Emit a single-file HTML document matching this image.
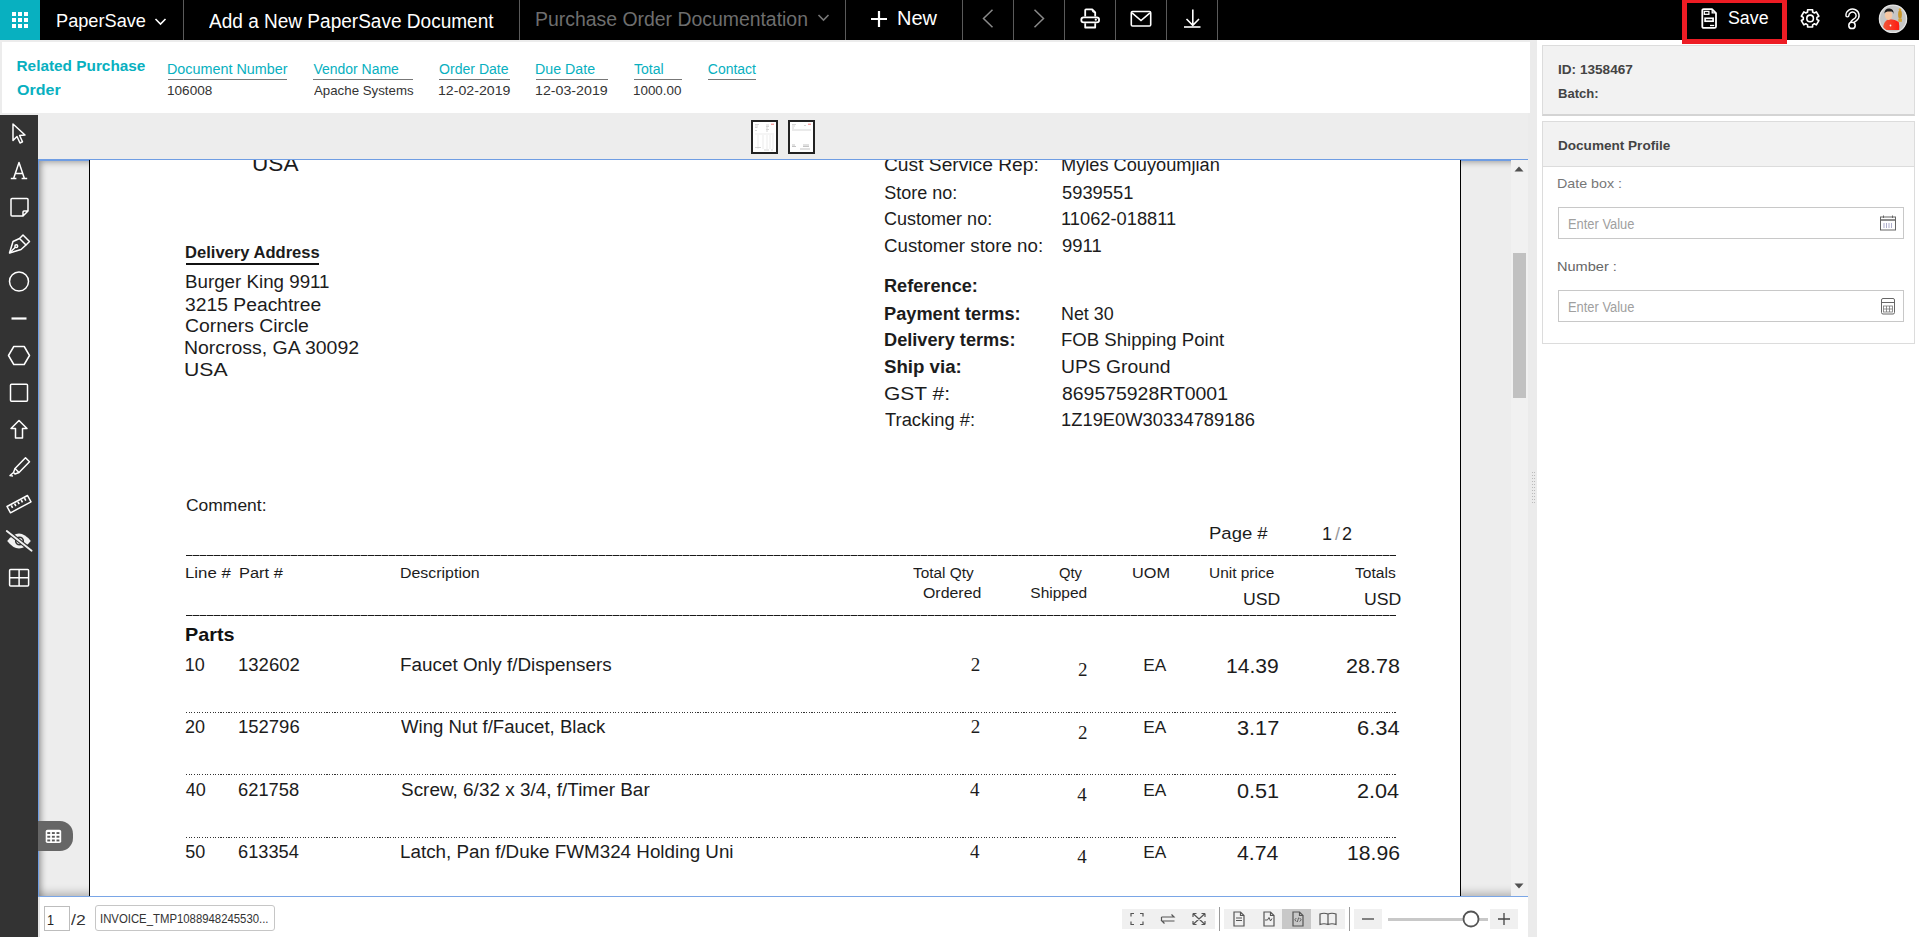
<!DOCTYPE html><html><head><meta charset="utf-8"><style>
html,body{margin:0;padding:0;width:1919px;height:937px;overflow:hidden;background:#ececec}
.t{position:absolute;white-space:nowrap;line-height:0;transform-origin:0 0}
svg{overflow:visible}
</style></head><body>
<div style="position:absolute;left:0px;top:0px;width:1919px;height:937px;background:#ececec"></div>
<div style="position:absolute;left:0px;top:0px;width:1919px;height:40px;background:#000"></div>
<div style="position:absolute;left:0px;top:0px;width:40px;height:40px;background:#08b0c0"></div>
<svg style="position:absolute;left:0px;top:0px;" width="40" height="40" viewBox="0 0 40 40"><rect x="12" y="12" width="4" height="4" fill="#fff"/><rect x="12" y="18" width="4" height="4" fill="#fff"/><rect x="12" y="24" width="4" height="4" fill="#fff"/><rect x="18" y="12" width="4" height="4" fill="#fff"/><rect x="18" y="18" width="4" height="4" fill="#fff"/><rect x="18" y="24" width="4" height="4" fill="#fff"/><rect x="24" y="12" width="4" height="4" fill="#fff"/><rect x="24" y="18" width="4" height="4" fill="#fff"/><rect x="24" y="24" width="4" height="4" fill="#fff"/></svg>
<div class="t" style="left:56.04px;top:21.12px;font-size:19.13px;font-family:'Liberation Sans', sans-serif;font-weight:400;color:#fff;transform:scaleX(0.9515);">PaperSave</div>
<svg style="position:absolute;left:150px;top:14px;" width="20" height="16" viewBox="0 0 20 16"><path d="M5.5 5 L10.5 10 L15.5 5" stroke="#fff" stroke-width="1.6" fill="none"/></svg>
<div style="position:absolute;left:183px;top:0px;width:1px;height:40px;background:#5a5a5a"></div>
<div style="position:absolute;left:519px;top:0px;width:1px;height:40px;background:#5a5a5a"></div>
<div style="position:absolute;left:845px;top:0px;width:1px;height:40px;background:#5a5a5a"></div>
<div style="position:absolute;left:962px;top:0px;width:1px;height:40px;background:#5a5a5a"></div>
<div style="position:absolute;left:1013px;top:0px;width:1px;height:40px;background:#5a5a5a"></div>
<div style="position:absolute;left:1064px;top:0px;width:1px;height:40px;background:#5a5a5a"></div>
<div style="position:absolute;left:1115px;top:0px;width:1px;height:40px;background:#5a5a5a"></div>
<div style="position:absolute;left:1166px;top:0px;width:1px;height:40px;background:#5a5a5a"></div>
<div style="position:absolute;left:1217px;top:0px;width:1px;height:40px;background:#5a5a5a"></div>
<div class="t" style="left:209.00px;top:21.32px;font-size:19.55px;font-family:'Liberation Sans', sans-serif;font-weight:400;color:#fff;transform:scaleX(0.9743);">Add a New PaperSave Document</div>
<div class="t" style="left:535.45px;top:18.92px;font-size:19.55px;font-family:'Liberation Sans', sans-serif;font-weight:400;color:#6e6e6e;transform:scaleX(0.9938);">Purchase Order Documentation</div>
<svg style="position:absolute;left:813px;top:10px;" width="20" height="16" viewBox="0 0 20 16"><path d="M5.5 5 L10.5 10 L15.5 5" stroke="#777" stroke-width="1.6" fill="none"/></svg>
<svg style="position:absolute;left:866px;top:8px;" width="26" height="22" viewBox="0 0 26 22"><path d="M13 3 V19 M5 11 H21" stroke="#fff" stroke-width="2.2" fill="none"/></svg>
<div class="t" style="left:896.90px;top:17.97px;font-size:19.41px;font-family:'Liberation Sans', sans-serif;font-weight:400;color:#fff;transform:scaleX(1.0302);">New</div>
<svg style="position:absolute;left:978px;top:6px;" width="20" height="26" viewBox="0 0 20 26"><path d="M14.5 3.8 L5.5 12.5 L14.5 21.2" stroke="#8a8a8a" stroke-width="1.5" fill="none"/></svg>
<svg style="position:absolute;left:1029px;top:6px;" width="20" height="26" viewBox="0 0 20 26"><path d="M5.5 3.8 L14.5 12.5 L5.5 21.2" stroke="#8a8a8a" stroke-width="1.5" fill="none"/></svg>
<svg style="position:absolute;left:1078px;top:6px;" width="26" height="26" viewBox="0 0 26 26"><path d="M7.2 10.5 V4.2 Q7.2 3.4 8 3.4 H14.2 L17.2 6.4 V10.5" stroke="#fff" stroke-width="1.8" fill="none" stroke-linejoin="round"/><path d="M14.2 4 Q14.6 6.5 17 6.6" stroke="#fff" stroke-width="1.2" fill="none"/><rect x="3.3" y="11.4" width="17.8" height="5" rx="2.4" stroke="#fff" stroke-width="1.8" fill="none"/><path d="M7.2 17.2 V21.5 H17.2 V17.2" stroke="#fff" stroke-width="1.8" fill="none" stroke-linejoin="round"/><circle cx="17.8" cy="13.7" r="1.1" fill="#fff"/></svg>
<svg style="position:absolute;left:1128px;top:8px;" width="26" height="22" viewBox="0 0 26 22"><rect x="3.3" y="3.5" width="19.4" height="14.5" rx="1.3" stroke="#fff" stroke-width="1.6" fill="none"/><path d="M4 4.8 L13 12.5 L22 4.8" stroke="#fff" stroke-width="1.6" fill="none"/></svg>
<svg style="position:absolute;left:1180px;top:6px;" width="26" height="26" viewBox="0 0 26 26"><path d="M12.8 3.6 V19 M6.5 13 L12.8 19.3 L19 13" stroke="#fff" stroke-width="1.6" fill="none"/><path d="M4 21 H20.5" stroke="#fff" stroke-width="1.6"/></svg>
<svg style="position:absolute;left:1797px;top:5px;" width="26" height="26" viewBox="0 0 26 26"><polygon points="10.60,6.97 10.60,4.75 15.60,4.75 15.60,6.97 17.42,8.02 19.34,6.91 21.84,11.24 19.92,12.35 19.92,14.45 21.84,15.56 19.34,19.89 17.42,18.78 15.60,19.83 15.60,22.05 10.60,22.05 10.60,19.83 8.78,18.78 6.86,19.89 4.36,15.56 6.28,14.45 6.28,12.35 4.36,11.24 6.86,6.91 8.78,8.02" stroke="#fff" stroke-width="1.6" fill="none" stroke-linejoin="round"/><circle cx="13.1" cy="13.4" r="3.3" stroke="#fff" stroke-width="1.6" fill="none"/></svg>
<svg style="position:absolute;left:1840px;top:5px;" width="24" height="26" viewBox="0 0 24 26"><path d="M7.4 10.4 A5.1 5 0 1 1 15.6 14.5 L13.6 15.8 Q12.2 16.7 12.1 17.8" stroke="#fff" stroke-width="4.4" fill="none" stroke-linecap="round"/><path d="M7.4 10.4 A5.1 5 0 1 1 15.6 14.5 L13.6 15.8 Q12.2 16.7 12.1 17.8" stroke="#000" stroke-width="1.5" fill="none" stroke-linecap="round"/><circle cx="12" cy="20.4" r="3.2" stroke="#fff" stroke-width="1.5" fill="#000"/></svg>
<svg style="position:absolute;left:1878px;top:4px;" width="30" height="30" viewBox="0 0 30 30"><defs><clipPath id="av"><circle cx="15" cy="14.8" r="13.3"/></clipPath><linearGradient id="sh" x1="0" x2="1"><stop offset="0" stop-color="#f0583a"/><stop offset="1" stop-color="#ff1a10"/></linearGradient></defs><circle cx="15" cy="14.8" r="13.9" fill="#c6c6c6"/><g clip-path="url(#av)"><path d="M5 26 Q4.8 17.5 10.5 15.3 Q17 15 20.8 18.2 Q21.6 22 21.2 26 Z" fill="url(#sh)"/><ellipse cx="10.6" cy="11.2" rx="3.7" ry="4.8" fill="#f6c7a4"/><path d="M6.3 9.5 Q6.8 4.3 11.5 4.6 Q15.8 4.8 15.6 10 Q15 7.8 13.8 7.6 Q12 7.2 9.5 7.6 Q7.2 8 6.3 9.5 Z" fill="#1e1e1e"/><circle cx="12.5" cy="21.5" r="0.9" fill="#fff"/><circle cx="22" cy="5.6" r="1.3" fill="#d9a830"/><ellipse cx="22" cy="10.5" rx="1.9" ry="4.3" fill="#c9962a"/><rect x="20.3" y="14.6" width="3.6" height="3.2" fill="#d4a436"/></g><circle cx="15" cy="14.8" r="13.6" stroke="#e4e4e4" stroke-width="1.3" fill="none"/></svg>
<div style="position:absolute;left:2px;top:42px;width:1528px;height:71px;background:#fff"></div>
<div class="t" style="left:16.50px;top:66.38px;font-size:15.36px;font-family:'Liberation Sans', sans-serif;font-weight:700;color:#08b0c0;">Related Purchase</div>
<div class="t" style="left:16.86px;top:89.98px;font-size:15.36px;font-family:'Liberation Sans', sans-serif;font-weight:700;color:#08b0c0;transform:scaleX(1.0434);">Order</div>
<div class="t" style="left:167.35px;top:69.36px;font-size:13.97px;font-family:'Liberation Sans', sans-serif;font-weight:400;color:#08b0c0;transform:scaleX(1.0272);">Document Number</div>
<div style="position:absolute;left:168px;top:79px;width:119px;height:1.3px;background:#777"></div>
<div class="t" style="left:167.48px;top:90.60px;font-size:12.99px;font-family:'Liberation Sans', sans-serif;font-weight:400;color:#333;transform:scaleX(1.0449);">106008</div>
<div class="t" style="left:313.43px;top:69.36px;font-size:13.97px;font-family:'Liberation Sans', sans-serif;font-weight:400;color:#08b0c0;">Vendor Name</div>
<div style="position:absolute;left:313px;top:79px;width:100px;height:1.3px;background:#777"></div>
<div class="t" style="left:313.50px;top:90.60px;font-size:12.99px;font-family:'Liberation Sans', sans-serif;font-weight:400;color:#333;transform:scaleX(1.0224);">Apache Systems</div>
<div class="t" style="left:438.87px;top:69.36px;font-size:13.97px;font-family:'Liberation Sans', sans-serif;font-weight:400;color:#08b0c0;transform:scaleX(1.0073);">Order Date</div>
<div style="position:absolute;left:439px;top:79px;width:71px;height:1.3px;background:#777"></div>
<div class="t" style="left:438.44px;top:90.60px;font-size:12.99px;font-family:'Liberation Sans', sans-serif;font-weight:400;color:#333;transform:scaleX(1.0897);">12-02-2019</div>
<div class="t" style="left:535.36px;top:69.36px;font-size:13.97px;font-family:'Liberation Sans', sans-serif;font-weight:400;color:#08b0c0;transform:scaleX(1.0181);">Due Date</div>
<div style="position:absolute;left:536px;top:79px;width:72px;height:1.3px;background:#777"></div>
<div class="t" style="left:535.43px;top:90.60px;font-size:12.99px;font-family:'Liberation Sans', sans-serif;font-weight:400;color:#333;transform:scaleX(1.0943);">12-03-2019</div>
<div class="t" style="left:634.22px;top:69.36px;font-size:13.97px;font-family:'Liberation Sans', sans-serif;font-weight:400;color:#08b0c0;transform:scaleX(1.0077);">Total</div>
<div style="position:absolute;left:634px;top:79px;width:48px;height:1.3px;background:#777"></div>
<div class="t" style="left:633.49px;top:90.60px;font-size:12.99px;font-family:'Liberation Sans', sans-serif;font-weight:400;color:#333;transform:scaleX(1.0324);">1000.00</div>
<div class="t" style="left:707.80px;top:69.36px;font-size:13.97px;font-family:'Liberation Sans', sans-serif;font-weight:400;color:#08b0c0;">Contact</div>
<div style="position:absolute;left:708px;top:79px;width:48px;height:1.3px;background:#777"></div>
<div style="position:absolute;left:38px;top:113px;width:1492px;height:46px;background:#ededed"></div>
<svg style="position:absolute;left:751px;top:120px;" width="27" height="34" viewBox="0 0 27 34"><rect x="1" y="1" width="25" height="32" fill="#fff" stroke="#222" stroke-width="2"/><rect x="20" y="3.6" width="3" height="1.4" fill="#f4a0a0"/><path d="M4 4.5 H8 M4 6 H7 M4 7.5 H6.5 M4 10.5 H6 M15 5 H18 M15 6.5 H18 M15 8 H17 M15 9.5 H18 M15 11 H17" stroke="#bbb" stroke-width="0.6"/><path d="M4 14 H23 M7 15 V29 M12 15 V29 M16 15 V29 M19 15 V29 M22 15 V29" stroke="#d6d6d6" stroke-width="0.5"/><path d="M4 27.5 H10 M13 30 H18 M20 30 H22" stroke="#bbb" stroke-width="0.6"/></svg>
<svg style="position:absolute;left:788px;top:120px;" width="27" height="34" viewBox="0 0 27 34"><rect x="1" y="1" width="25" height="32" fill="#fff" stroke="#222" stroke-width="2"/><rect x="20" y="3.6" width="3" height="1.4" fill="#f4a0a0"/><path d="M4 4.5 H8 M4 6 H7 M4 8 H6 M16 5.5 H18 M4 10 H23" stroke="#bbb" stroke-width="0.6"/><path d="M4 25 H7 M4 26.5 H8 M15 25 H21 M15 26.5 H21 M12 29 H22" stroke="#aaa" stroke-width="0.7"/></svg>
<div style="position:absolute;left:38px;top:159px;width:1490px;height:738px;background:#ededed;box-shadow:inset 6px 6px 6px -3px rgba(0,0,0,0.35), inset 0 -8px 8px -4px rgba(0,0,0,0.25)"></div>
<div style="position:absolute;left:38px;top:159px;width:1490px;height:1.5px;background:#6f9de3"></div>
<div style="position:absolute;left:38px;top:159px;width:1px;height:738px;background:#6f9de3"></div>
<div style="position:absolute;left:89px;top:160px;width:1372px;height:737px;background:#fff;border-left:1px solid #000;border-right:1px solid #000;box-sizing:border-box"></div>
<div style="position:absolute;left:1511px;top:160px;width:17px;height:736px;background:#f1f1f1"></div>
<div style="position:absolute;left:1513px;top:253px;width:13px;height:145px;background:#c1c1c1"></div>
<svg style="position:absolute;left:1514px;top:165px;" width="10" height="8" viewBox="0 0 10 8"><path d="M0.5 6.5 L5 1.5 L9.5 6.5 Z" fill="#505050"/></svg>
<svg style="position:absolute;left:1514px;top:882px;" width="10" height="8" viewBox="0 0 10 8"><path d="M0.5 1.5 L5 6.5 L9.5 1.5 Z" fill="#505050"/></svg>
<div style="position:absolute;left:38px;top:896px;width:1490px;height:1px;background:#7aa6e6"></div>
<div style="position:absolute;left:38px;top:897px;width:1490px;height:40px;background:#fff;border-left:2px solid #e6e6e6;box-sizing:border-box"></div>
<div style="position:absolute;left:0px;top:115px;width:38px;height:822px;background:#333"></div>
<svg style="position:absolute;left:0px;top:116.5px;" width="38" height="33" viewBox="0 0 38 33"><path d="M13 7 L13 23.5 L17 19.5 L20 26 L22.5 24.8 L19.6 18.5 L25 18 Z" stroke="#fff" stroke-width="1.5" fill="none" stroke-linejoin="round"/></svg>
<svg style="position:absolute;left:0px;top:153.5px;" width="38" height="33" viewBox="0 0 38 33"><path d="M10.8 24.6 H16.4 M21.6 24.6 H27.2 M13.6 24.6 L19 8.5 L24.4 24.6 M15.3 19.4 H22.7" stroke="#fff" stroke-width="1.5" fill="none" stroke-linejoin="round"/></svg>
<svg style="position:absolute;left:0px;top:190.5px;" width="38" height="33" viewBox="0 0 38 33"><path d="M11 8.5 Q11 7.5 12 7.5 H27 Q28 7.5 28 8.5 V20 L23 25 H12 Q11 25 11 24 Z M28 20 H24 Q23 20 23 21 V25" stroke="#fff" stroke-width="1.5" fill="none" stroke-linejoin="round"/></svg>
<svg style="position:absolute;left:0px;top:227.5px;" width="38" height="33" viewBox="0 0 38 33"></svg>
<svg style="position:absolute;left:0px;top:264.5px;" width="38" height="33" viewBox="0 0 38 33"><circle cx="19" cy="16.5" r="9.5" stroke="#fff" stroke-width="1.5" fill="none" stroke-linejoin="round"/></svg>
<svg style="position:absolute;left:0px;top:301.5px;" width="38" height="33" viewBox="0 0 38 33"><path d="M11.5 16.5 H26.5" stroke="#fff" stroke-width="2.2"/></svg>
<svg style="position:absolute;left:0px;top:338.5px;" width="38" height="33" viewBox="0 0 38 33"><path d="M8.5 16.5 L13.8 7.5 H24.2 L29.5 16.5 L24.2 25.5 H13.8 Z" stroke="#fff" stroke-width="1.5" fill="none" stroke-linejoin="round"/></svg>
<svg style="position:absolute;left:0px;top:375.5px;" width="38" height="33" viewBox="0 0 38 33"><rect x="10.5" y="8.3" width="17" height="17" rx="1" stroke="#fff" stroke-width="1.5" fill="none" stroke-linejoin="round"/></svg>
<svg style="position:absolute;left:0px;top:412.5px;" width="38" height="33" viewBox="0 0 38 33"><path d="M19 7.5 L27 15.5 H22.5 V25 H15.5 V15.5 H11 Z" stroke="#fff" stroke-width="1.5" fill="none" stroke-linejoin="round"/></svg>
<svg style="position:absolute;left:0px;top:449.5px;" width="38" height="33" viewBox="0 0 38 33"></svg>
<svg style="position:absolute;left:0px;top:486.5px;" width="38" height="33" viewBox="0 0 38 33"></svg>
<svg style="position:absolute;left:0px;top:523.5px;" width="38" height="33" viewBox="0 0 38 33"></svg>
<svg style="position:absolute;left:0px;top:560.5px;" width="38" height="33" viewBox="0 0 38 33"><rect x="9.6" y="8.5" width="19" height="16.5" rx="1" stroke="#fff" stroke-width="1.5" fill="none" stroke-linejoin="round"/><path d="M19.1 8.5 V25 M9.6 16.7 H28.6" stroke="#fff" stroke-width="1.5" fill="none" stroke-linejoin="round"/></svg>
<svg style="position:absolute;left:0px;top:228.5px;" width="38" height="33" viewBox="0 0 38 33"><path d="M19.5 9.5 L23 6 L29.5 12.5 L26 16 Z" stroke="#fff" stroke-width="1.5" fill="none" stroke-linejoin="round"/><path d="M19.5 9.5 L13 12.5 L9.5 24 L21 20.5 L26 16" stroke="#fff" stroke-width="1.5" fill="none" stroke-linejoin="round"/><path d="M9.5 24 L15.3 18.2" stroke="#fff" stroke-width="1.5" fill="none" stroke-linejoin="round"/><circle cx="16.3" cy="17.2" r="1.4" stroke="#fff" stroke-width="1.5" fill="none" stroke-linejoin="round"/></svg>
<svg style="position:absolute;left:0px;top:449.5px;" width="38" height="33" viewBox="0 0 38 33"><path d="M15 18.5 L25.5 7.8 L29.5 11.8 L19 22.5 Z" stroke="#fff" stroke-width="1.5" fill="none" stroke-linejoin="round"/><path d="M15 18.5 L13.5 22.5 L15 24 L19 22.5 M13.5 22.5 L10 25.5 L13 26" stroke="#fff" stroke-width="1.5" fill="none" stroke-linejoin="round"/></svg>
<svg style="position:absolute;left:0px;top:486.5px;" width="38" height="33" viewBox="0 0 38 33"><path d="M7 19.5 L27.5 8.5 L31 14.8 L10.5 25.8 Z" stroke="#fff" stroke-width="1.5" fill="none" stroke-linejoin="round"/><path d="M11.3 18.4 L12.6 20.8 M14.6 16.6 L15.9 19 M17.9 14.8 L19.2 17.2 M21.2 13 L22.5 15.4 M24.5 11.2 L25.8 13.6" stroke="#fff" stroke-width="1.6"/></svg>
<svg style="position:absolute;left:0px;top:523.5px;" width="38" height="33" viewBox="0 0 38 33"><path d="M7.2 17 Q19 2 30.8 17 Q19 32 7.2 17 Z" fill="#f2f2f2"/><circle cx="19.5" cy="17" r="3.8" stroke="#333" stroke-width="1.6" fill="#f2f2f2"/><path d="M6.8 7.1 L31.6 26.7" stroke="#333" stroke-width="4.2"/><path d="M6.8 7.1 L31.6 26.7" stroke="#f2f2f2" stroke-width="1.9" stroke-linecap="round"/></svg>
<div style="position:absolute;left:38px;top:821px;width:35px;height:30px;background:#666;border-radius:0 13px 13px 0"></div>
<svg style="position:absolute;left:45px;top:828px;" width="18" height="17" viewBox="0 0 18 17"><rect x="0.7" y="1.8" width="15.5" height="13.3" rx="1.8" fill="#fff"/><rect x="2.3" y="4.10" width="2.9" height="1.9" fill="#5a5a5a"/><rect x="2.3" y="7.80" width="2.9" height="1.9" fill="#5a5a5a"/><rect x="2.3" y="11.50" width="2.9" height="1.9" fill="#5a5a5a"/><rect x="6.9" y="4.10" width="2.9" height="1.9" fill="#5a5a5a"/><rect x="6.9" y="7.80" width="2.9" height="1.9" fill="#5a5a5a"/><rect x="6.9" y="11.50" width="2.9" height="1.9" fill="#5a5a5a"/><rect x="11.5" y="4.10" width="2.9" height="1.9" fill="#5a5a5a"/><rect x="11.5" y="7.80" width="2.9" height="1.9" fill="#5a5a5a"/><rect x="11.5" y="11.50" width="2.9" height="1.9" fill="#5a5a5a"/></svg>
<div style="position:absolute;left:44px;top:906px;width:26px;height:25px;border:1px solid #bdbdbd;box-sizing:border-box;background:#fff"></div>
<div class="t" style="left:46.55px;top:919.52px;font-size:14.66px;font-family:'Liberation Sans', sans-serif;font-weight:400;color:#222;transform:scaleX(0.8622);">1</div>
<div class="t" style="left:71.00px;top:919.97px;font-size:15.08px;font-family:'Liberation Sans', sans-serif;font-weight:400;color:#333;transform:scaleX(1.1655);">/2</div>
<div style="position:absolute;left:95px;top:905px;width:180px;height:26px;border:1px solid #c6c6c6;box-sizing:border-box;border-radius:3px;background:#fff"></div>
<div class="t" style="left:99.98px;top:919.05px;font-size:12.85px;font-family:'Liberation Sans', sans-serif;font-weight:400;color:#333;transform:scaleX(0.8839);">INVOICE_TMP1088948245530...</div>
<div style="position:absolute;left:1122px;top:909px;width:93px;height:20px;background:#f0f0f0"></div>
<div style="position:absolute;left:1219px;top:907px;width:1px;height:24px;background:#9a9a9a"></div>
<div style="position:absolute;left:1224px;top:909px;width:121px;height:20px;background:#f0f0f0"></div>
<div style="position:absolute;left:1282px;top:909px;width:29px;height:20px;background:#c8c8c8"></div>
<div style="position:absolute;left:1349px;top:907px;width:1px;height:24px;background:#9a9a9a"></div>
<div style="position:absolute;left:1354px;top:909px;width:28px;height:20px;background:#f0f0f0"></div>
<div style="position:absolute;left:1490px;top:909px;width:28px;height:20px;background:#f0f0f0"></div>
<svg style="position:absolute;left:1128px;top:911px;" width="18" height="16" viewBox="0 0 18 16"><path d="M3 5.5 V2.5 H6 M12 2.5 H15 V5.5 M15 10.5 V13.5 H12 M6 13.5 H3 V10.5" stroke="#555" stroke-width="1.2" fill="none"/></svg>
<svg style="position:absolute;left:1159px;top:911px;" width="18" height="16" viewBox="0 0 18 16"><path d="M2.5 6 H15 L12.5 3.5 M15.5 10 H3 L5.5 12.5" stroke="#555" stroke-width="1.2" fill="none"/><path d="M2.5 6 V10" stroke="#555" stroke-width="1.2" fill="none"/></svg>
<svg style="position:absolute;left:1190px;top:911px;" width="18" height="16" viewBox="0 0 18 16"><path d="M3 2.5 L15 13.5 M15 2.5 L3 13.5 M3 2.5 H6.5 M3 2.5 V6 M15 2.5 H11.5 M15 2.5 V6 M3 13.5 H6.5 M3 13.5 V10 M15 13.5 H11.5 M15 13.5 V10" stroke="#555" stroke-width="1.2" fill="none"/></svg>
<svg style="position:absolute;left:1230px;top:910px;" width="18" height="18" viewBox="0 0 18 18"><path d="M4 2 H10.5 L14 5.5 V16 H4 Z M10.5 2 V5.5 H14" stroke="#555" stroke-width="1.2" fill="none"/><path d="M6 8 H12 M6 10.5 H12" stroke="#555" stroke-width="1"/></svg>
<svg style="position:absolute;left:1260px;top:910px;" width="18" height="18" viewBox="0 0 18 18"><path d="M4 2 H10.5 L14 5.5 V16 H4 Z M10.5 2 V5.5 H14" stroke="#555" stroke-width="1.2" fill="none"/><path d="M5 10 L7.5 10 L9 7.5 L10.5 11 L12 8.5" stroke="#555" stroke-width="1" fill="none"/></svg>
<svg style="position:absolute;left:1289px;top:910px;" width="18" height="18" viewBox="0 0 18 18"><path d="M4 2 H10.5 L14 5.5 V16 H4 Z M10.5 2 V5.5 H14" stroke="#555" stroke-width="1.2" fill="none"/><path d="M7.3 8 L5.8 9.8 L7.3 11.6 M10.7 8 L12.2 9.8 L10.7 11.6 M9.7 7.5 L8.3 12" stroke="#555" stroke-width="0.9" fill="none"/></svg>
<svg style="position:absolute;left:1318px;top:910px;" width="20" height="18" viewBox="0 0 20 18"><path d="M2 4 Q6 2.5 10 4 Q14 2.5 18 4 V14.5 Q14 13 10 14.5 Q6 13 2 14.5 Z M10 4 V14.5" stroke="#555" stroke-width="1.2" fill="none"/></svg>
<svg style="position:absolute;left:1360px;top:911px;" width="16" height="16" viewBox="0 0 16 16"><path d="M2 8 H14" stroke="#444" stroke-width="1.3"/></svg>
<div style="position:absolute;left:1388px;top:918px;width:100px;height:3px;background:#c8c8c8"></div>
<svg style="position:absolute;left:1461px;top:909px;" width="20" height="20" viewBox="0 0 20 20"><circle cx="10" cy="10" r="7.5" fill="#fff" stroke="#555" stroke-width="1.8"/></svg>
<svg style="position:absolute;left:1496px;top:911px;" width="16" height="16" viewBox="0 0 16 16"><path d="M2 8 H14 M8 2 V14" stroke="#444" stroke-width="1.3"/></svg>
<div style="position:absolute;left:1528px;top:113px;width:9px;height:824px;background:#ebebeb"></div>
<div style="position:absolute;left:1530px;top:40px;width:7px;height:73px;background:#ebebeb"></div>
<div style="position:absolute;left:1537px;top:40px;width:382px;height:897px;background:#fff"></div>
<div style="position:absolute;left:1532px;top:472px;width:1px;height:1px;background:#bbb"></div><div style="position:absolute;left:1534px;top:472px;width:1px;height:1px;background:#bbb"></div><div style="position:absolute;left:1532px;top:475px;width:1px;height:1px;background:#bbb"></div><div style="position:absolute;left:1534px;top:475px;width:1px;height:1px;background:#bbb"></div><div style="position:absolute;left:1532px;top:478px;width:1px;height:1px;background:#bbb"></div><div style="position:absolute;left:1534px;top:478px;width:1px;height:1px;background:#bbb"></div><div style="position:absolute;left:1532px;top:481px;width:1px;height:1px;background:#bbb"></div><div style="position:absolute;left:1534px;top:481px;width:1px;height:1px;background:#bbb"></div><div style="position:absolute;left:1532px;top:484px;width:1px;height:1px;background:#bbb"></div><div style="position:absolute;left:1534px;top:484px;width:1px;height:1px;background:#bbb"></div><div style="position:absolute;left:1532px;top:487px;width:1px;height:1px;background:#bbb"></div><div style="position:absolute;left:1534px;top:487px;width:1px;height:1px;background:#bbb"></div><div style="position:absolute;left:1532px;top:490px;width:1px;height:1px;background:#bbb"></div><div style="position:absolute;left:1534px;top:490px;width:1px;height:1px;background:#bbb"></div><div style="position:absolute;left:1532px;top:493px;width:1px;height:1px;background:#bbb"></div><div style="position:absolute;left:1534px;top:493px;width:1px;height:1px;background:#bbb"></div><div style="position:absolute;left:1532px;top:496px;width:1px;height:1px;background:#bbb"></div><div style="position:absolute;left:1534px;top:496px;width:1px;height:1px;background:#bbb"></div><div style="position:absolute;left:1532px;top:499px;width:1px;height:1px;background:#bbb"></div><div style="position:absolute;left:1534px;top:499px;width:1px;height:1px;background:#bbb"></div><div style="position:absolute;left:1532px;top:502px;width:1px;height:1px;background:#bbb"></div><div style="position:absolute;left:1534px;top:502px;width:1px;height:1px;background:#bbb"></div>
<div style="position:absolute;left:1542px;top:45px;width:373px;height:71px;background:#f2f2f2;border:1px solid #dcdcdc;border-bottom:2px solid #d4d4d4;box-sizing:border-box"></div>
<div class="t" style="left:1557.62px;top:70.16px;font-size:13.69px;font-family:'Liberation Sans', sans-serif;font-weight:700;color:#444;transform:scaleX(0.9931);">ID: 1358467</div>
<div class="t" style="left:1557.65px;top:94.16px;font-size:13.69px;font-family:'Liberation Sans', sans-serif;font-weight:700;color:#444;transform:scaleX(0.9544);">Batch:</div>
<div style="position:absolute;left:1542px;top:121px;width:373px;height:223px;background:#fff;border:1px solid #dcdcdc;box-sizing:border-box"></div>
<div style="position:absolute;left:1543px;top:122px;width:371px;height:44px;background:#f2f2f2;border-bottom:1px solid #dcdcdc"></div>
<div class="t" style="left:1557.62px;top:146.16px;font-size:13.69px;font-family:'Liberation Sans', sans-serif;font-weight:700;color:#444;transform:scaleX(0.9908);">Document Profile</div>
<div class="t" style="left:1556.86px;top:184.25px;font-size:13.41px;font-family:'Liberation Sans', sans-serif;font-weight:400;color:#777;transform:scaleX(1.0647);">Date box :</div>
<div style="position:absolute;left:1558px;top:207px;width:346px;height:32px;border:1px solid #c8c8c8;box-sizing:border-box"></div>
<div class="t" style="left:1568.37px;top:224.26px;font-size:13.97px;font-family:'Liberation Sans', sans-serif;font-weight:400;color:#a0a0a0;transform:scaleX(0.9233);">Enter Value</div>
<svg style="position:absolute;left:1879px;top:214px;" width="18" height="18" viewBox="0 0 18 18"><rect x="1.5" y="3" width="15" height="13" fill="none" stroke="#666" stroke-width="1"/><path d="M1.5 6 H16.5" stroke="#666" stroke-width="1.5"/><path d="M4.5 1.5 V4 M13.5 1.5 V4" stroke="#666" stroke-width="1"/><path d="M5 9 V14 M7.5 9 V14 M10 9 V14 M12.5 9 V14" stroke="#a6a6c8" stroke-width="0.9"/></svg>
<div class="t" style="left:1556.83px;top:267.05px;font-size:13.41px;font-family:'Liberation Sans', sans-serif;font-weight:400;color:#666;transform:scaleX(1.0866);">Number :</div>
<div style="position:absolute;left:1558px;top:290px;width:346px;height:32px;border:1px solid #c8c8c8;box-sizing:border-box"></div>
<div class="t" style="left:1568.37px;top:307.46px;font-size:13.97px;font-family:'Liberation Sans', sans-serif;font-weight:400;color:#a0a0a0;transform:scaleX(0.9233);">Enter Value</div>
<svg style="position:absolute;left:1880px;top:297px;" width="16" height="18" viewBox="0 0 16 18"><rect x="1.5" y="1.5" width="13" height="15.5" rx="1.5" fill="none" stroke="#666" stroke-width="1"/><path d="M1.5 5.5 H14.5" stroke="#666" stroke-width="1"/><rect x="3.5" y="9" width="9" height="6" fill="none" stroke="#777" stroke-width="0.8"/><path d="M6.5 9 V15 M9.5 9 V15 M3.5 12 H12.5" stroke="#777" stroke-width="0.8"/></svg>
<div style="position:absolute;left:0;top:0;width:1919px;height:937px;clip-path:inset(160px 0 41px 0)">
<div class="t" style="left:252.30px;top:163.91px;font-size:21.90px;font-family:'Liberation Sans', sans-serif;font-weight:400;color:#1c1c1c;transform:scaleX(1.0332);">USA</div>
<div class="t" style="left:184.92px;top:252.76px;font-size:16.00px;font-family:'Liberation Sans', sans-serif;font-weight:700;color:#1c1c1c;transform:scaleX(1.0352);">Delivery Address</div>
<div style="position:absolute;left:186px;top:262.5px;width:133px;height:2.2px;background:#111"></div>
<div class="t" style="left:184.50px;top:281.66px;font-size:18.00px;font-family:'Liberation Sans', sans-serif;font-weight:400;color:#1c1c1c;transform:scaleX(1.0415);">Burger King 9911</div>
<div class="t" style="left:185.23px;top:305.26px;font-size:18.00px;font-family:'Liberation Sans', sans-serif;font-weight:400;color:#1c1c1c;transform:scaleX(1.0721);">3215 Peachtree</div>
<div class="t" style="left:185.03px;top:326.26px;font-size:18.00px;font-family:'Liberation Sans', sans-serif;font-weight:400;color:#1c1c1c;transform:scaleX(1.0767);">Corners Circle</div>
<div class="t" style="left:184.45px;top:348.16px;font-size:18.00px;font-family:'Liberation Sans', sans-serif;font-weight:400;color:#1c1c1c;transform:scaleX(1.0798);">Norcross, GA 30092</div>
<div class="t" style="left:184.41px;top:370.26px;font-size:18.00px;font-family:'Liberation Sans', sans-serif;font-weight:400;color:#1c1c1c;transform:scaleX(1.1785);">USA</div>
<div class="t" style="left:884.04px;top:164.96px;font-size:18.00px;font-family:'Liberation Sans', sans-serif;font-weight:400;color:#1c1c1c;transform:scaleX(1.0669);">Cust Service Rep:</div>
<div class="t" style="left:1061.14px;top:164.96px;font-size:18.00px;font-family:'Liberation Sans', sans-serif;font-weight:400;color:#1c1c1c;transform:scaleX(1.0114);">Myles Couyoumjian</div>
<div class="t" style="left:884.19px;top:193.26px;font-size:18.00px;font-family:'Liberation Sans', sans-serif;font-weight:400;color:#1c1c1c;">Store no:</div>
<div class="t" style="left:1061.87px;top:193.26px;font-size:18.00px;font-family:'Liberation Sans', sans-serif;font-weight:400;color:#1c1c1c;transform:scaleX(1.0177);">5939551</div>
<div class="t" style="left:884.10px;top:219.16px;font-size:18.00px;font-family:'Liberation Sans', sans-serif;font-weight:400;color:#1c1c1c;">Customer no:</div>
<div class="t" style="left:1061.23px;top:219.16px;font-size:18.00px;font-family:'Liberation Sans', sans-serif;font-weight:400;color:#1c1c1c;transform:scaleX(1.0158);">11062-018811</div>
<div class="t" style="left:884.06px;top:246.16px;font-size:18.00px;font-family:'Liberation Sans', sans-serif;font-weight:400;color:#1c1c1c;transform:scaleX(1.0393);">Customer store no:</div>
<div class="t" style="left:1061.77px;top:246.16px;font-size:18.00px;font-family:'Liberation Sans', sans-serif;font-weight:400;color:#1c1c1c;transform:scaleX(1.0248);">9911</div>
<div class="t" style="left:883.82px;top:285.96px;font-size:18.00px;font-family:'Liberation Sans', sans-serif;font-weight:700;color:#1c1c1c;transform:scaleX(1.0091);">Reference:</div>
<div class="t" style="left:883.82px;top:314.06px;font-size:18.00px;font-family:'Liberation Sans', sans-serif;font-weight:700;color:#1c1c1c;transform:scaleX(1.0120);">Payment terms:</div>
<div class="t" style="left:1061.17px;top:314.06px;font-size:18.00px;font-family:'Liberation Sans', sans-serif;font-weight:400;color:#1c1c1c;transform:scaleX(0.9933);">Net 30</div>
<div class="t" style="left:883.82px;top:340.06px;font-size:18.00px;font-family:'Liberation Sans', sans-serif;font-weight:700;color:#1c1c1c;transform:scaleX(1.0105);">Delivery terms:</div>
<div class="t" style="left:1061.11px;top:340.06px;font-size:18.00px;font-family:'Liberation Sans', sans-serif;font-weight:400;color:#1c1c1c;transform:scaleX(1.0319);">FOB Shipping Point</div>
<div class="t" style="left:884.44px;top:366.96px;font-size:18.00px;font-family:'Liberation Sans', sans-serif;font-weight:700;color:#1c1c1c;transform:scaleX(1.0369);">Ship via:</div>
<div class="t" style="left:1061.15px;top:366.96px;font-size:18.00px;font-family:'Liberation Sans', sans-serif;font-weight:400;color:#1c1c1c;transform:scaleX(1.0719);">UPS Ground</div>
<div class="t" style="left:883.95px;top:393.66px;font-size:18.00px;font-family:'Liberation Sans', sans-serif;font-weight:400;color:#1c1c1c;transform:scaleX(1.1647);">GST #:</div>
<div class="t" style="left:1061.73px;top:393.66px;font-size:18.00px;font-family:'Liberation Sans', sans-serif;font-weight:400;color:#1c1c1c;transform:scaleX(1.0789);">869575928RT0001</div>
<div class="t" style="left:884.63px;top:419.76px;font-size:18.00px;font-family:'Liberation Sans', sans-serif;font-weight:400;color:#1c1c1c;transform:scaleX(1.0196);">Tracking #:</div>
<div class="t" style="left:1061.22px;top:419.76px;font-size:18.00px;font-family:'Liberation Sans', sans-serif;font-weight:400;color:#1c1c1c;transform:scaleX(1.0197);">1Z19E0W30334789186</div>
<div class="t" style="left:185.63px;top:505.61px;font-size:17.00px;font-family:'Liberation Sans', sans-serif;font-weight:400;color:#1c1c1c;transform:scaleX(1.0265);">Comment:</div>
<div class="t" style="left:1208.72px;top:533.99px;font-size:16.76px;font-family:'Liberation Sans', sans-serif;font-weight:400;color:#1c1c1c;transform:scaleX(1.1044);">Page #</div>
<div class="t" style="left:1321.95px;top:533.66px;font-size:18.00px;font-family:'Liberation Sans', sans-serif;font-weight:400;color:#1c1c1c;">1</div>
<div class="t" style="left:1335.00px;top:533.66px;font-size:18.00px;font-family:'Liberation Sans', sans-serif;font-weight:400;color:#999;">/</div>
<div class="t" style="left:1342.10px;top:533.66px;font-size:18.00px;font-family:'Liberation Sans', sans-serif;font-weight:400;color:#1c1c1c;">2</div>
<div style="position:absolute;left:186px;top:555px;width:1210px;height:1.3px;background:repeating-linear-gradient(90deg,#1a1a1a 0,#1a1a1a 6.3px,#888 6.3px,#888 7px)"></div>
<div style="position:absolute;left:186px;top:614.7px;width:1210px;height:1.3px;background:repeating-linear-gradient(90deg,#1a1a1a 0,#1a1a1a 6.3px,#888 6.3px,#888 7px)"></div>
<div class="t" style="left:184.65px;top:573.13px;font-size:15.50px;font-family:'Liberation Sans', sans-serif;font-weight:400;color:#1c1c1c;transform:scaleX(1.0850);">Line #</div>
<div class="t" style="left:239.29px;top:573.13px;font-size:15.50px;font-family:'Liberation Sans', sans-serif;font-weight:400;color:#1c1c1c;transform:scaleX(1.0603);">Part #</div>
<div class="t" style="left:400.23px;top:573.13px;font-size:15.50px;font-family:'Liberation Sans', sans-serif;font-weight:400;color:#1c1c1c;transform:scaleX(1.0272);">Description</div>
<div class="t" style="left:912.79px;top:572.83px;font-size:15.50px;font-family:'Liberation Sans', sans-serif;font-weight:400;color:#1c1c1c;transform:scaleX(0.9928);">Total Qty</div>
<div class="t" style="left:923.03px;top:592.83px;font-size:15.50px;font-family:'Liberation Sans', sans-serif;font-weight:400;color:#1c1c1c;transform:scaleX(1.0254);">Ordered</div>
<div class="t" style="left:1058.94px;top:572.83px;font-size:15.50px;font-family:'Liberation Sans', sans-serif;font-weight:400;color:#1c1c1c;transform:scaleX(0.9528);">Qty</div>
<div class="t" style="left:1030.30px;top:592.83px;font-size:15.50px;font-family:'Liberation Sans', sans-serif;font-weight:400;color:#1c1c1c;">Shipped</div>
<div class="t" style="left:1132.08px;top:572.73px;font-size:15.50px;font-family:'Liberation Sans', sans-serif;font-weight:400;color:#1c1c1c;transform:scaleX(1.0501);">UOM</div>
<div class="t" style="left:1209.24px;top:572.73px;font-size:15.50px;font-family:'Liberation Sans', sans-serif;font-weight:400;color:#1c1c1c;transform:scaleX(0.9964);">Unit price</div>
<div class="t" style="left:1355.19px;top:572.73px;font-size:15.50px;font-family:'Liberation Sans', sans-serif;font-weight:400;color:#1c1c1c;transform:scaleX(1.0075);">Totals</div>
<div class="t" style="left:1243.37px;top:599.94px;font-size:16.62px;font-family:'Liberation Sans', sans-serif;font-weight:400;color:#1c1c1c;transform:scaleX(1.0643);">USD</div>
<div class="t" style="left:1363.97px;top:599.94px;font-size:16.62px;font-family:'Liberation Sans', sans-serif;font-weight:400;color:#1c1c1c;transform:scaleX(1.0643);">USD</div>
<div class="t" style="left:184.71px;top:635.22px;font-size:19.00px;font-family:'Liberation Sans', sans-serif;font-weight:700;color:#111;transform:scaleX(1.0416);">Parts</div>
<div class="t" style="left:184.65px;top:665.16px;font-size:18.00px;font-family:'Liberation Sans', sans-serif;font-weight:400;color:#1c1c1c;">10</div>
<div class="t" style="left:237.51px;top:665.16px;font-size:18.00px;font-family:'Liberation Sans', sans-serif;font-weight:400;color:#1c1c1c;transform:scaleX(1.0298);">132602</div>
<div class="t" style="left:399.99px;top:665.16px;font-size:18.00px;font-family:'Liberation Sans', sans-serif;font-weight:400;color:#1c1c1c;transform:scaleX(1.0476);">Faucet Only f/Dispensers</div>
<div class="t" style="left:970.75px;top:665.29px;font-size:19.00px;font-family:'Liberation Serif', serif;font-weight:400;color:#1c1c1c;">2</div>
<div class="t" style="left:1078.05px;top:670.09px;font-size:19.00px;font-family:'Liberation Serif', serif;font-weight:400;color:#1c1c1c;">2</div>
<div class="t" style="left:1143.32px;top:665.41px;font-size:17.30px;font-family:'Liberation Sans', sans-serif;font-weight:400;color:#1c1c1c;">EA</div>
<div class="t" style="left:1226.42px;top:665.83px;font-size:20.39px;font-family:'Liberation Sans', sans-serif;font-weight:400;color:#1c1c1c;transform:scaleX(1.0344);">14.39</div>
<div class="t" style="left:1346.02px;top:665.83px;font-size:20.39px;font-family:'Liberation Sans', sans-serif;font-weight:400;color:#1c1c1c;transform:scaleX(1.0561);">28.78</div>
<div style="position:absolute;left:186px;top:712px;width:1211px;height:1.4px;background:repeating-linear-gradient(90deg,#333 0,#333 1.1px,transparent 1.1px,transparent 2.65px)"></div>
<div class="t" style="left:185.10px;top:727.16px;font-size:18.00px;font-family:'Liberation Sans', sans-serif;font-weight:400;color:#1c1c1c;">20</div>
<div class="t" style="left:237.51px;top:727.16px;font-size:18.00px;font-family:'Liberation Sans', sans-serif;font-weight:400;color:#1c1c1c;transform:scaleX(1.0266);">152796</div>
<div class="t" style="left:401.41px;top:727.16px;font-size:18.00px;font-family:'Liberation Sans', sans-serif;font-weight:400;color:#1c1c1c;transform:scaleX(1.0313);">Wing Nut f/Faucet, Black</div>
<div class="t" style="left:970.75px;top:727.29px;font-size:19.00px;font-family:'Liberation Serif', serif;font-weight:400;color:#1c1c1c;">2</div>
<div class="t" style="left:1078.05px;top:732.79px;font-size:19.00px;font-family:'Liberation Serif', serif;font-weight:400;color:#1c1c1c;">2</div>
<div class="t" style="left:1143.32px;top:727.41px;font-size:17.30px;font-family:'Liberation Sans', sans-serif;font-weight:400;color:#1c1c1c;">EA</div>
<div class="t" style="left:1237.03px;top:727.83px;font-size:20.39px;font-family:'Liberation Sans', sans-serif;font-weight:400;color:#1c1c1c;transform:scaleX(1.0654);">3.17</div>
<div class="t" style="left:1357.01px;top:727.83px;font-size:20.39px;font-family:'Liberation Sans', sans-serif;font-weight:400;color:#1c1c1c;transform:scaleX(1.0726);">6.34</div>
<div style="position:absolute;left:186px;top:774px;width:1211px;height:1.4px;background:repeating-linear-gradient(90deg,#333 0,#333 1.1px,transparent 1.1px,transparent 2.65px)"></div>
<div class="t" style="left:185.64px;top:790.06px;font-size:18.00px;font-family:'Liberation Sans', sans-serif;font-weight:400;color:#1c1c1c;">40</div>
<div class="t" style="left:237.98px;top:790.06px;font-size:18.00px;font-family:'Liberation Sans', sans-serif;font-weight:400;color:#1c1c1c;transform:scaleX(1.0187);">621758</div>
<div class="t" style="left:400.65px;top:790.06px;font-size:18.00px;font-family:'Liberation Sans', sans-serif;font-weight:400;color:#1c1c1c;transform:scaleX(1.0520);">Screw, 6/32 x 3/4, f/Timer Bar</div>
<div class="t" style="left:969.99px;top:790.19px;font-size:19.00px;font-family:'Liberation Serif', serif;font-weight:400;color:#1c1c1c;">4</div>
<div class="t" style="left:1077.28px;top:795.29px;font-size:19.00px;font-family:'Liberation Serif', serif;font-weight:400;color:#1c1c1c;">4</div>
<div class="t" style="left:1143.32px;top:790.31px;font-size:17.30px;font-family:'Liberation Sans', sans-serif;font-weight:400;color:#1c1c1c;">EA</div>
<div class="t" style="left:1237.03px;top:790.73px;font-size:20.39px;font-family:'Liberation Sans', sans-serif;font-weight:400;color:#1c1c1c;transform:scaleX(1.0626);">0.51</div>
<div class="t" style="left:1357.42px;top:790.73px;font-size:20.39px;font-family:'Liberation Sans', sans-serif;font-weight:400;color:#1c1c1c;transform:scaleX(1.0621);">2.04</div>
<div style="position:absolute;left:186px;top:837px;width:1211px;height:1.4px;background:repeating-linear-gradient(90deg,#333 0,#333 1.1px,transparent 1.1px,transparent 2.65px)"></div>
<div class="t" style="left:185.28px;top:852.06px;font-size:18.00px;font-family:'Liberation Sans', sans-serif;font-weight:400;color:#1c1c1c;">50</div>
<div class="t" style="left:237.99px;top:852.06px;font-size:18.00px;font-family:'Liberation Sans', sans-serif;font-weight:400;color:#1c1c1c;transform:scaleX(1.0140);">613354</div>
<div class="t" style="left:400.00px;top:852.06px;font-size:18.00px;font-family:'Liberation Sans', sans-serif;font-weight:400;color:#1c1c1c;transform:scaleX(1.0451);">Latch, Pan f/Duke FWM324 Holding Uni</div>
<div class="t" style="left:969.99px;top:852.19px;font-size:19.00px;font-family:'Liberation Serif', serif;font-weight:400;color:#1c1c1c;">4</div>
<div class="t" style="left:1077.28px;top:856.99px;font-size:19.00px;font-family:'Liberation Serif', serif;font-weight:400;color:#1c1c1c;">4</div>
<div class="t" style="left:1143.32px;top:852.31px;font-size:17.30px;font-family:'Liberation Sans', sans-serif;font-weight:400;color:#1c1c1c;">EA</div>
<div class="t" style="left:1237.27px;top:852.73px;font-size:20.39px;font-family:'Liberation Sans', sans-serif;font-weight:400;color:#1c1c1c;transform:scaleX(1.0453);">4.74</div>
<div class="t" style="left:1346.91px;top:852.73px;font-size:20.39px;font-family:'Liberation Sans', sans-serif;font-weight:400;color:#1c1c1c;transform:scaleX(1.0384);">18.96</div>
</div>
<div style="position:absolute;left:1682px;top:0px;width:105px;height:44px;background:#ed1c24"></div>
<div style="position:absolute;left:1687px;top:3px;width:95px;height:36px;background:#000"></div>
<svg style="position:absolute;left:1698px;top:6px;" width="24" height="26" viewBox="0 0 24 26"><path d="M4.3 4.6 Q4.3 3.1 5.8 3.1 H14 L18 7.1 V20.4 Q18 21.9 16.5 21.9 H5.8 Q4.3 21.9 4.3 20.4 Z" stroke="#fff" stroke-width="1.8" fill="none" stroke-linejoin="round"/><path d="M14.2 3.4 V6.9 H17.8" stroke="#fff" stroke-width="1.3" fill="none"/><rect x="6.3" y="5.4" width="4.6" height="2.9" stroke="#fff" stroke-width="1.3" fill="none"/><rect x="7.1" y="12.3" width="8" height="2.9" stroke="#fff" stroke-width="1.7" fill="none"/><path d="M12 19.5 H16.2" stroke="#fff" stroke-width="1.3"/></svg>
<div class="t" style="left:1728.20px;top:18.02px;font-size:18.99px;font-family:'Liberation Sans', sans-serif;font-weight:400;color:#fff;transform:scaleX(0.9376);">Save</div>
</body></html>
